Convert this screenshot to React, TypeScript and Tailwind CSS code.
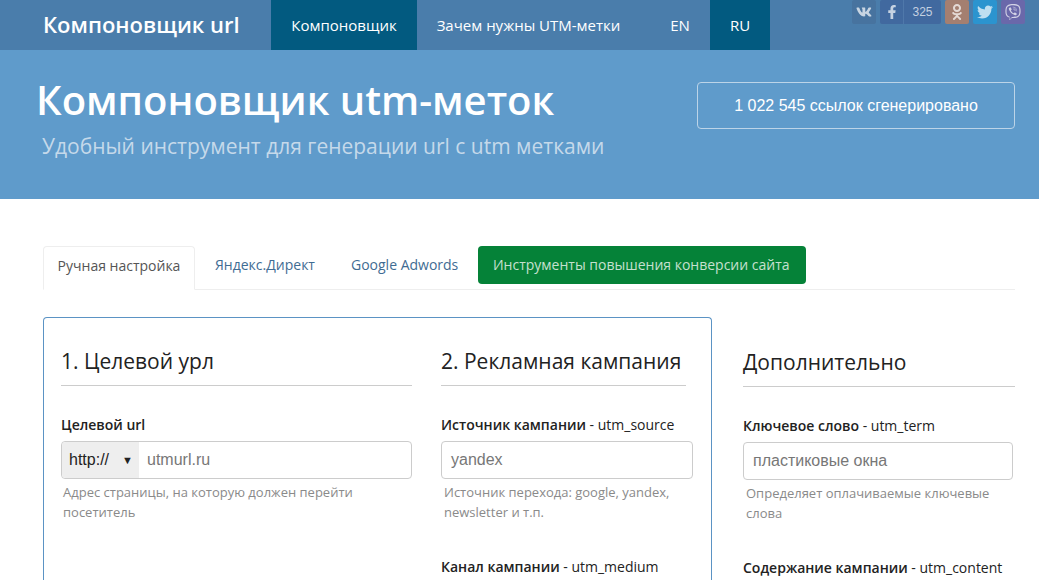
import React from 'react';
import { FaVk, FaFacebookF, FaOdnoklassniki, FaTwitter, FaViber } from 'react-icons/fa';

const font = 'font-["Open_Sans",sans-serif]';

const Field: React.FC<{ label: string; tag?: string; value: string; help: string[] }> = ({ label, tag, value, help }) => (
  <div>
    <div className="text-[14px] leading-[20px] text-[#222]">
      <span className="font-semibold">{label}</span>
      {tag && <span> - {tag}</span>}
    </div>
    <div className="mt-[6px] h-[38px] rounded border border-[#ccc] pl-[9px] flex items-center text-[16px] text-[#777] font-['Liberation_Sans',sans-serif]">
      {value}
    </div>
    <div className="mt-[3px] pl-[3px] text-[13px] leading-[20px] text-[#8a8a8a]">
      {help.map((h) => (
        <div key={h}>{h}</div>
      ))}
    </div>
  </div>
);

export default function App() {
  return (
    <div className={`${font} h-[580px] w-[1039px] overflow-hidden bg-white`}>
      <nav className="relative h-[50px] bg-[#4a7dab] flex text-white">
        <div className="ml-[43px] w-[228px] text-[22px] leading-[48px] font-semibold">Компоновщик url</div>
        <a className="w-[146px] bg-[#025a80] text-center text-[15px] leading-[50px]">Компоновщик</a>
        <a className="w-[223px] text-center text-[15px] leading-[50px]">Зачем нужны UTM-метки</a>
        <a className="ml-[20px] w-[40px] text-center text-[15px] leading-[50px]">EN</a>
        <a className="ml-[10px] w-[60px] bg-[#025a80] text-center text-[15px] leading-[50px]">RU</a>
        <div className="absolute left-[852px] top-0 flex h-[24px] gap-[4px] text-white/70">
          <span className="w-[24px] rounded-[2px] bg-[#47739f] flex items-center justify-center"><FaVk size={16} /></span>
          <span className="w-[61px] rounded-[2px] bg-[#41699f] flex items-center">
            <span className="w-[24px] h-full border-r border-[#4f78aa] flex items-center justify-center"><FaFacebookF size={14} /></span>
            <span className="flex-1 text-center text-[12px] font-['Liberation_Sans',sans-serif]">325</span>
          </span>
          <span className="w-[24px] rounded-[2px] bg-[#a47f70] flex items-center justify-center"><FaOdnoklassniki size={16} /></span>
          <span className="w-[24px] rounded-[2px] bg-[#2b94cf] flex items-center justify-center"><FaTwitter size={16} /></span>
          <span className="w-[24px] rounded-[2px] bg-[#6a68aa] flex items-center justify-center"><FaViber size={16} /></span>
        </div>
      </nav>

      <header className="h-[149px] bg-[#5f9bcb] flex">
        <div className="w-[697px] pl-[36px]">
          <h1 className="mt-[19px] text-[40px] leading-[62px] font-semibold text-white">Компоновщик utm-меток</h1>
          <p className="ml-[6px] text-[21px] leading-[30px] text-[#c5d9ea]">Удобный инструмент для генерации url с utm метками</p>
        </div>
        <div className="mt-[32px] h-[47px] w-[318px] rounded border border-[#bcd4e8] flex items-center justify-center text-[16px] text-white font-['Liberation_Sans',sans-serif]">
          1 022 545 ссылок сгенерировано
        </div>
      </header>

      <main className="px-[43px] pr-[24px]">
        <div className="mt-[47px] h-[44px] flex items-stretch border-b border-[#eee] text-[14px]">
          <div className="w-[152px] h-[44px] rounded-t border border-[#eee] border-b-white bg-white flex items-center justify-center pb-[5px] text-[#555]">Ручная настройка</div>
          <div className="ml-[20px] leading-[38px] text-[#3f6c93]">Яндекс.Директ</div>
          <div className="ml-[36px] leading-[38px] text-[#3f6c93]">Google Adwords</div>
          <div className="ml-[20px] h-[38px] w-[328px] rounded bg-[#058238] pr-[2px] text-center text-[14px] leading-[37px] text-[#c5e0cf]">Инструменты повышения конверсии сайта</div>
        </div>

        <div className="mt-[27px] flex items-start">
          <div className="w-[669px] h-[300px] shrink-0 rounded-t border border-[#5b93c4] border-b-0 px-[17px] flex gap-[29px]">
            <section className="w-[351px]">
              <h2 className="mt-[28px] pb-[8px] border-b border-[#ccc] text-[21px] leading-[31px] text-[#222]">1. Целевой урл</h2>
              <div className="mt-[29px] text-[14px] leading-[20px] font-semibold text-[#222]">Целевой url</div>
              <div className="mt-[6px] h-[38px] rounded border border-[#ccc] flex items-center">
                <div className="w-[77px] h-full bg-[#eee] rounded-l flex items-center pl-[7px] text-[16px] text-[#222] font-['Liberation_Sans',sans-serif]">
                  http://
                  <span className="ml-[13px] text-[11px]">▼</span>
                </div>
                <div className="pl-[8px] text-[16px] text-[#777] font-['Liberation_Sans',sans-serif]">utmurl.ru</div>
              </div>
              <div className="mt-[3px] pl-[2px] text-[13px] leading-[20px] text-[#8a8a8a]">
                <div>Адрес страницы, на которую должен перейти</div>
                <div>посетитель</div>
              </div>
            </section>
            <section className="w-[252px]">
              <h2 className="mt-[28px] w-[245px] pb-[8px] border-b border-[#ccc] text-[21px] leading-[31px] whitespace-nowrap text-[#222]">2. Рекламная кампания</h2>
              <div className="mt-[29px]">
                <Field label="Источник кампании" tag="utm_source" value="yandex" help={['Источник перехода: google, yandex,', 'newsletter и т.п.']} />
              </div>
              <div className="mt-[35px] text-[14px] leading-[20px] text-[#222]">
                <span className="font-semibold">Канал кампании</span> - utm_medium
              </div>
            </section>
          </div>
          <aside className="ml-[31px] w-[272px] shrink-0">
            <h2 className="mt-[30px] pb-[8px] border-b border-[#ccc] text-[21px] leading-[31px] text-[#222]">Дополнительно</h2>
            <div className="mt-[29px] w-[270px]">
              <Field label="Ключевое слово" tag="utm_term" value="пластиковые окна" help={['Определяет оплачиваемые ключевые', 'слова']} />
            </div>
            <div className="mt-[35px] text-[14px] leading-[20px] text-[#222]">
              <span className="font-semibold">Содержание кампании</span> - utm_content
            </div>
          </aside>
        </div>
      </main>
    </div>
  );
}
